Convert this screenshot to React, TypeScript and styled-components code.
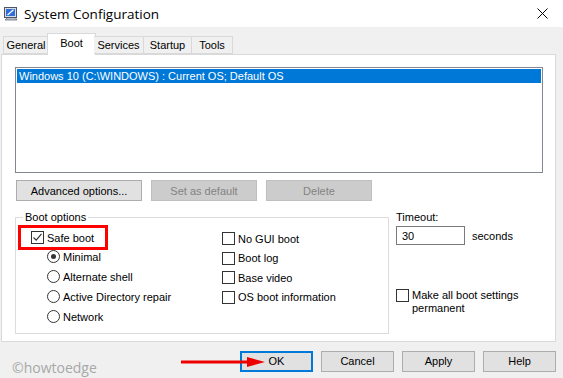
import styled, { createGlobalStyle } from "styled-components";

const GlobalStyle = createGlobalStyle`
  html, body {
    margin: 0;
    padding: 0;
    background: #f0f0f0;
  }
  body {
    font-family: "Liberation Sans", Arial, sans-serif;
    font-size: 11px;
    color: #000;
  }
`;

const Window = styled.div`
  width: 563px;
  height: 378px;
  display: flex;
  flex-direction: column;
  overflow: hidden;
  position: relative;
`;

const TitleBar = styled.div`
  height: 27px;
  background: #fff;
  display: flex;
  align-items: center;
  padding-left: 3px;
  flex-shrink: 0;
`;

const Title = styled.span`
  font-family: "Open Sans", "Noto Sans", sans-serif;
  font-size: 13.5px;
  margin-left: 5px;
  color: #000;
`;

const CloseBox = styled.div`
  margin-left: auto;
  width: 46px;
  height: 27px;
  display: flex;
  align-items: center;
  justify-content: center;
  margin-right: -2px;
`;

const Body = styled.div`
  flex: 1;
  display: flex;
  flex-direction: column;
  padding: 6px 7px 0 1px;
`;

const TabStrip = styled.div`
  display: flex;
  align-items: flex-end;
  height: 21px;
  padding-left: 2px;
  position: relative;
  z-index: 1;
`;

const Tab = styled.div<{ $active?: boolean; $w: number }>`
  width: ${(p) => p.$w}px;
  box-sizing: border-box;
  height: ${(p) => (p.$active ? 22 : 18)}px;
  margin-bottom: ${(p) => (p.$active ? -1 : 0)}px;
  margin-left: ${(p) => (p.$active ? -2 : 0)}px;
  margin-right: ${(p) => (p.$active ? -2 : 0)}px;
  background: ${(p) => (p.$active ? "#fff" : "#f0f0f0")};
  border: 1px solid #d9d9d9;
  border-bottom: ${(p) => (p.$active ? "none" : "1px solid #d9d9d9")};
  border-left-width: ${(p) => (p.$active ? 1 : 0)}px;
  display: flex;
  align-items: ${(p) => (p.$active ? "flex-start" : "center")};
  padding-top: ${(p) => (p.$active ? 3 : 0)}px;
  justify-content: center;
  &:first-child {
    border-left-width: 1px;
  }
`;

const Panel = styled.div`
  height: 288px;
  box-sizing: border-box;
  background: #fff;
  border: 1px solid #d9d9d9;
  padding: 12px 12px 0 13px;
  display: flex;
  flex-direction: column;
`;

const ListBox = styled.div`
  height: 106px;
  box-sizing: border-box;
  border: 1px solid #828790;
  padding: 1px;
`;

const ListItem = styled.div<{ $selected?: boolean }>`
  height: 14px;
  line-height: 14px;
  padding-left: 2px;
  background: ${(p) => (p.$selected ? "#0078d7" : "transparent")};
  color: ${(p) => (p.$selected ? "#fff" : "#000")};
  white-space: nowrap;
`;

const ButtonRow = styled.div`
  display: flex;
  gap: 9px;
  margin-top: 7px;
  padding-left: 1px;
`;

const Button = styled.div<{ $w: number; $disabled?: boolean; $default?: boolean }>`
  width: ${(p) => p.$w}px;
  height: 21px;
  box-sizing: border-box;
  display: flex;
  align-items: center;
  justify-content: center;
  background: ${(p) => (p.$disabled ? "#cccccc" : "#e1e1e1")};
  border: ${(p) =>
    p.$default ? "2px solid #0078d7" : p.$disabled ? "1px solid #bfbfbf" : "1px solid #adadad"};
  color: ${(p) => (p.$disabled ? "#838383" : "#000")};
  white-space: nowrap;
`;

const Lower = styled.div`
  display: flex;
  margin-top: 10px;
`;

const GroupBox = styled.fieldset`
  margin: 0;
  width: 374px;
  height: 123px;
  box-sizing: border-box;
  border: 1px solid #dcdcdc;
  padding: 0 0 0 2px;
  display: flex;
`;

const Legend = styled.legend`
  padding: 0 2px;
  margin-left: 5px;
  line-height: 13px;
`;

const LeftCol = styled.div`
  width: 204px;
  display: flex;
  flex-direction: column;
`;

const RightCol = styled.div`
  display: flex;
  flex-direction: column;
  gap: 6.5px;
  padding-top: 8px;
`;

const Highlight = styled.div`
  width: 90px;
  height: 25px;
  box-sizing: border-box;
  border: 3px solid #ff0000;
  display: flex;
  align-items: center;
  padding-left: 10px;
  margin-top: 1px;
`;

const RadioList = styled.div`
  display: flex;
  flex-direction: column;
  gap: 7px;
  padding-left: 29px;
`;

const Option = styled.label`
  display: flex;
  align-items: center;
  height: 13px;
  gap: 3px;
  white-space: nowrap;
`;

const Box = styled.span`
  width: 13px;
  height: 13px;
  box-sizing: border-box;
  border: 1px solid #333;
  background: #fff;
  display: inline-flex;
  align-items: center;
  justify-content: center;
  flex-shrink: 0;
`;

const Circle = styled.span`
  width: 13px;
  height: 13px;
  box-sizing: border-box;
  border: 1px solid #333;
  border-radius: 50%;
  background: #fff;
  display: inline-flex;
  align-items: center;
  justify-content: center;
  flex-shrink: 0;
`;

const Dot = styled.span`
  width: 5px;
  height: 5px;
  border-radius: 50%;
  background: #333;
`;

const SideCol = styled.div`
  display: flex;
  flex-direction: column;
  padding-left: 7px;
`;

const TimeoutRow = styled.div`
  display: flex;
  align-items: center;
  gap: 7px;
  margin-top: 3px;
`;

const Input = styled.div`
  width: 69px;
  height: 19px;
  box-sizing: border-box;
  border: 1px solid #7a7a7a;
  padding-left: 5px;
  display: flex;
  align-items: center;
`;

const Permanent = styled.label`
  display: flex;
  align-items: flex-start;
  gap: 3px;
  margin-top: 44px;
  line-height: 13px;
`;

const Footer = styled.div`
  flex: 1;
  display: flex;
  align-items: center;
  position: relative;
`;

const Watermark = styled.span`
  font-family: "Open Sans", "Noto Sans", sans-serif;
  font-size: 14px;
  color: #a8a8a8;
  margin-left: 11px;
  margin-top: 14px;
`;

const FooterButtons = styled.div`
  margin-left: auto;
  display: flex;
  gap: 8px;
  margin-top: 2px;
`;

const Arrow = styled.svg`
  position: absolute;
  left: 180px;
  top: 14px;
`;

const Check = () => (
  <svg width="11" height="11" viewBox="0 0 11 11">
    <path d="M1.5 5.5 L4.2 8.2 L9.5 1.8" fill="none" stroke="#333" strokeWidth="1.2" />
  </svg>
);

const CheckBox = ({ checked }: { checked?: boolean }) => <Box>{checked && <Check />}</Box>;

const Radio = ({ checked }: { checked?: boolean }) => <Circle>{checked && <Dot />}</Circle>;

const AppIcon = () => (
  <svg width="16" height="16" viewBox="0 0 16 16">
    <path d="M2 14 L5 11 H12 L14 14 Z" fill="#b9bec8" stroke="#6b7280" strokeWidth="0.8" />
    <rect x="1.5" y="1.5" width="12" height="10" fill="#d8dce4" stroke="#4a5568" strokeWidth="1" />
    <rect x="3" y="3" width="9" height="7" fill="#2f6fd6" />
    <path d="M4.5 9 L10.5 3.8" stroke="#fff" strokeWidth="1.2" />
  </svg>
);

export default function App() {
  return (
    <>
      <GlobalStyle />
      <Window>
        <TitleBar>
          <AppIcon />
          <Title>System Configuration</Title>
          <CloseBox>
            <svg width="11" height="11" viewBox="0 0 11 11">
              <path d="M0.5 0.5 L10.5 10.5 M10.5 0.5 L0.5 10.5" stroke="#000" strokeWidth="1" />
            </svg>
          </CloseBox>
        </TitleBar>
        <Body>
          <TabStrip>
            <Tab $w={46}>General</Tab>
            <Tab $w={49} $active>Boot</Tab>
            <Tab $w={50}>Services</Tab>
            <Tab $w={48}>Startup</Tab>
            <Tab $w={41}>Tools</Tab>
          </TabStrip>
          <Panel>
            <ListBox>
              <ListItem $selected>Windows 10 (C:\WINDOWS) : Current OS; Default OS</ListItem>
            </ListBox>
            <ButtonRow>
              <Button $w={126}>Advanced options...</Button>
              <Button $w={106} $disabled>Set as default</Button>
              <Button $w={106} $disabled>Delete</Button>
            </ButtonRow>
            <Lower>
              <GroupBox>
                <Legend>Boot options</Legend>
                <LeftCol>
                  <Highlight>
                    <Option>
                      <CheckBox checked />
                      Safe boot
                    </Option>
                  </Highlight>
                  <RadioList>
                    <Option>
                      <Radio checked />
                      Minimal
                    </Option>
                    <Option>
                      <Radio />
                      Alternate shell
                    </Option>
                    <Option>
                      <Radio />
                      Active Directory repair
                    </Option>
                    <Option>
                      <Radio />
                      Network
                    </Option>
                  </RadioList>
                </LeftCol>
                <RightCol>
                  <Option>
                    <CheckBox />
                    No GUI boot
                  </Option>
                  <Option>
                    <CheckBox />
                    Boot log
                  </Option>
                  <Option>
                    <CheckBox />
                    Base video
                  </Option>
                  <Option>
                    <CheckBox />
                    OS boot information
                  </Option>
                </RightCol>
              </GroupBox>
              <SideCol>
                <span>Timeout:</span>
                <TimeoutRow>
                  <Input>30</Input>
                  <span>seconds</span>
                </TimeoutRow>
                <Permanent>
                  <CheckBox />
                  <span>
                    Make all boot settings
                    <br />
                    permanent
                  </span>
                </Permanent>
              </SideCol>
            </Lower>
          </Panel>
          <Footer>
            <Watermark>©howtoedge</Watermark>
            <Arrow width="84" height="12" viewBox="0 0 84 12">
              <path d="M0 6 H70" stroke="#ee0000" strokeWidth="3" />
              <path d="M66 1 L84 6 L66 11 Z" fill="#ee0000" />
            </Arrow>
            <FooterButtons>
              <Button $w={73} $default>OK</Button>
              <Button $w={73}>Cancel</Button>
              <Button $w={73}>Apply</Button>
              <Button $w={73}>Help</Button>
            </FooterButtons>
          </Footer>
        </Body>
      </Window>
    </>
  );
}
